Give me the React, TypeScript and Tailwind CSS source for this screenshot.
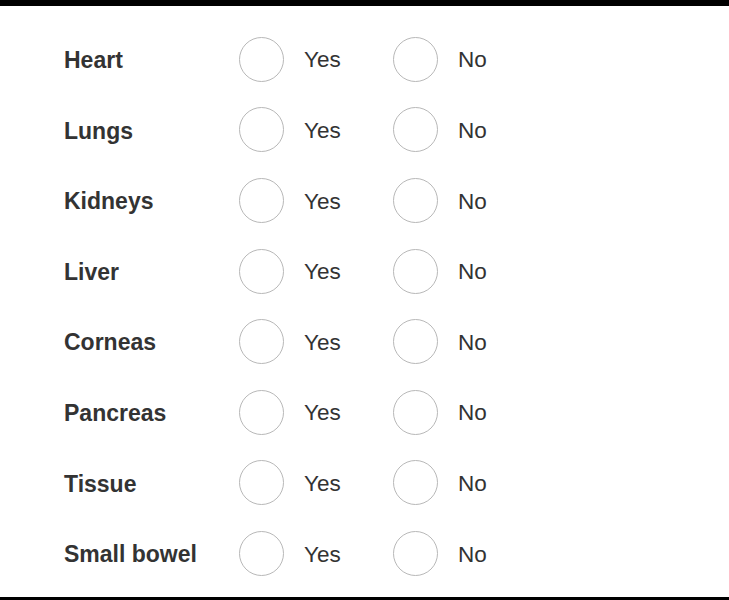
import React from "react";

const organs = ["Heart", "Lungs", "Kidneys", "Liver", "Corneas", "Pancreas", "Tissue", "Small bowel"];

function Option({ label }: { label: string }) {
  return (
    <label className="flex items-center w-[154px] cursor-pointer">
      <span className="w-[45px] h-[45px] rounded-full border-[1.5px] border-[#b8b8b8] bg-white shrink-0" />
      <span className="ml-[20px] mt-[2px] text-[22.5px] text-[#333333]">{label}</span>
    </label>
  );
}

export default function App() {
  return (
    <div className="w-[729px] h-[600px] flex flex-col bg-white" style={{ fontFamily: '"Liberation Sans", Arial, sans-serif' }}>
      <div className="h-[6px] bg-black shrink-0" />
      <div className="flex-1 pt-[18px] pl-[64px]">
        {organs.map((o) => (
          <div key={o} className="flex items-center h-[70.6px]">
            <div className="w-[175px] mt-[2px] text-[23px] font-bold text-[#333333]">{o}</div>
            <Option label="Yes" />
            <Option label="No" />
          </div>
        ))}
      </div>
      <div className="h-[3px] bg-black shrink-0" />
    </div>
  );
}
